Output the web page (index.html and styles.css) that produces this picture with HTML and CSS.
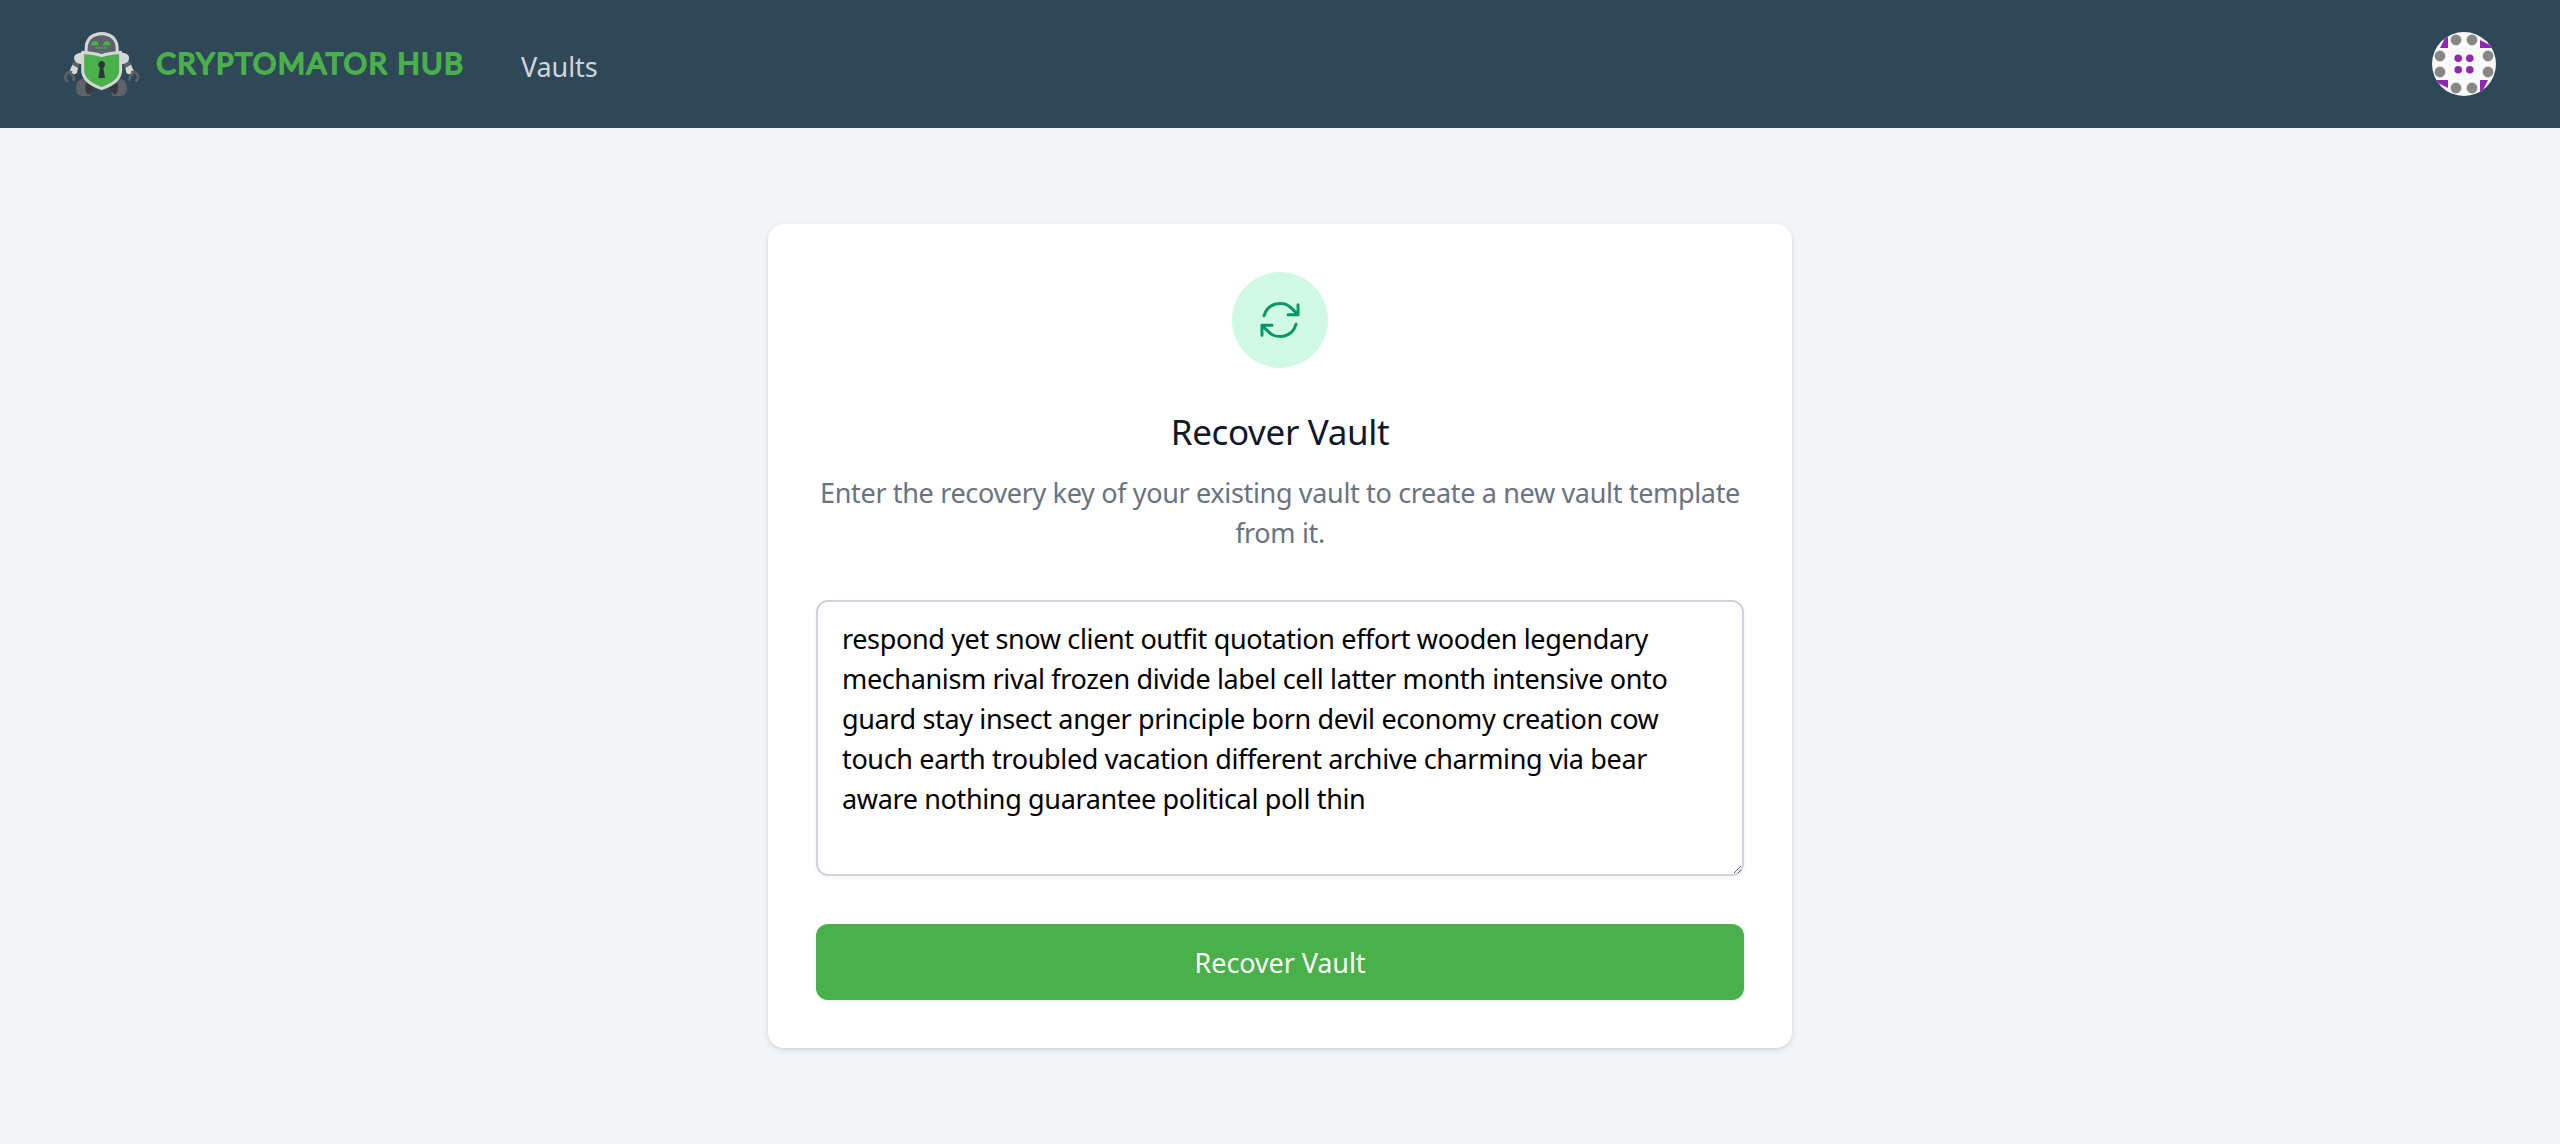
FILE: index.html
```html
<!DOCTYPE html>
<html lang="en">
<head>
<meta charset="utf-8">
<title>Cryptomator Hub</title>
<link rel="stylesheet" href="styles.css">
</head>
<body>
<header class="navbar">
  <div class="brand">
    <svg class="brand-logo" viewBox="42 36 228 192" aria-hidden="true">
      <path fill="#5b6268" d="M110 175c-22 0-32 12-32 30 0 16 8 23 20 23h22l8-34zM198 175c22 0 33 12 33 30 0 16-8 23-20 23h-24l-6-34z"/>
      <path fill="#35393c" d="M109 186l20 12c1 10-6 22-14 26-10-6-11-26-6-38zM201 186l-22 12c0 10 8 22 16 26 10-6 11-26 6-38z"/>
      <circle cx="77" cy="135" r="11" fill="#5b6268"/>
      <circle cx="233" cy="135" r="11" fill="#5b6268"/>
      <g fill="#d5d6d7">
        <path d="M88 99c10-2 16 3 16 12v16c-2 5-8 6-16 4-20-3-22-29 0-32zM222 99c-10-2-15 3-15 12v16c2 5 7 6 15 4 20-3 22-29 0-32z"/>
        <path d="M67 134l17 10-3 14c-8 9-22 4-22-6zM243 134l-17 10 3 14c8 9 22 4 22-6z"/>
        <path d="M104 97V84c0-29 21-48 51-48s51 19 51 48v13z"/>
      </g>
      <g fill="none" stroke="#5b6268" stroke-width="8">
        <path d="M66 157c-12-3-20 5-20 15 0 6 3 10 8 13M62 160c8 6 11 14 8 22"/>
        <path d="M244 157c12-3 20 5 20 15 0 6-3 10-8 13M248 160c-8 6-11 14-8 22"/>
      </g>
      <path fill="#5b6268" d="M113 96V85c0-24 18-39 42-39s42 15 42 39v11z"/>
      <path fill="#49b04a" d="M122 76c2-8 7-13 13-13s10 5 11 13zM158 76c2-8 6-13 11-13 7 0 12 5 14 13z"/>
      <path fill="none" stroke="#49b04a" stroke-width="6" stroke-dasharray="5 4" d="M136 83h37"/>
      <path fill="#49b04a" stroke="#d5d6d7" stroke-width="9" stroke-linejoin="round" d="M98 97c20 2 39 2 57 10 18-8 37-8 57-10v53c0 28-25 45-57 56-32-11-57-28-57-56z"/>
      <path fill="#303438" d="M155 122a12 12 0 0 1 5 22l5 30h-20l5-30a12 12 0 0 1 5-22z"/>
    </svg>
    <svg class="brand-name" viewBox="0 0 310 40">
      <text x="1.2" y="30.2" textLength="307" lengthAdjust="spacing">CRYPTOMATOR HUB</text>
    </svg>
  </div>
  <nav class="nav"><a class="nav-link">Vaults</a></nav>
  <svg class="avatar" viewBox="0 0 64 64" role="img" aria-label="Profile">
    <rect width="64" height="64" fill="#f8f8f8"/>
    <g fill="#8e28b4">
      <path d="M16 0v16H8zM48 8l16 8H48zM0 48h16v8zM48 48h8l-8 16z"/>
      <circle cx="26.2" cy="26.2" r="3.8"/><circle cx="37.8" cy="26.2" r="3.8"/>
      <circle cx="26.2" cy="37.8" r="3.8"/><circle cx="37.8" cy="37.8" r="3.8"/>
    </g>
    <g fill="#888">
      <circle cx="24" cy="8" r="5.4"/><circle cx="40" cy="8" r="5.4"/>
      <circle cx="8" cy="24" r="5.4"/><circle cx="56" cy="24" r="5.4"/>
      <circle cx="8" cy="40" r="5.4"/><circle cx="56" cy="40" r="5.4"/>
      <circle cx="24" cy="56" r="5.4"/><circle cx="40" cy="56" r="5.4"/>
    </g>
  </svg>
</header>
<main class="content">
  <form class="card">
    <div class="badge">
      <svg class="badge-icon" viewBox="0 0 24 24" aria-hidden="true">
        <path d="M16.023 9.348h4.992v-.001M2.985 19.644v-4.992m0 0h4.992m-4.993 0l3.181 3.183a8.25 8.25 0 0013.803-3.7M4.031 9.865a8.25 8.25 0 0113.803-3.7l3.181 3.182m0-4.991v4.99"/>
      </svg>
    </div>
    <h1 class="title">Recover Vault</h1>
    <p class="description">Enter the recovery key of your existing vault to create a new vault template from it.</p>
    <textarea class="recovery-key" rows="6" spellcheck="false" aria-label="Recovery key">respond yet snow client outfit quotation effort wooden legendary mechanism rival frozen divide label cell latter month intensive onto guard stay insect anger principle born devil economy creation cow touch earth troubled vacation different archive charming via bear aware nothing guarantee political poll thin</textarea>
    <button class="submit" type="button">Recover Vault</button>
  </form>
</main>
</body>
</html>
```
FILE: styles.css
```css
* {
  box-sizing: border-box;
}

body {
  margin: 0;
  min-height: 100vh;
  background: #f3f4f6;
  font-family: "Noto Sans", sans-serif;
  font-size: 27px;
  line-height: 40px;
}

.navbar {
  display: flex;
  align-items: center;
  height: 128px;
  padding: 0 64px;
  background: #2f4858;
}

.brand {
  display: flex;
  align-items: center;
  gap: 15px;
}

.brand-logo {
  width: 76px;
  height: 64px;
}

.brand-name {
  width: 310px;
  height: 40px;
  overflow: visible;
  fill: #49b04a;
  stroke: #49b04a;
  stroke-width: 1.8px;
  stroke-linejoin: round;
  font-family: Lato, sans-serif;
  font-size: 29.5px;
}

.nav {
  flex: 1;
  margin-left: 56px;
  padding-top: 5px;
}

.nav-link {
  color: #d1d5db;
  letter-spacing: -0.1px;
}

.avatar {
  width: 64px;
  height: 64px;
  border-radius: 50%;
}

.content {
  display: flex;
  justify-content: center;
  padding-top: 96px;
}

.card {
  display: flex;
  flex-direction: column;
  width: 1024px;
  padding: 48px;
  border-radius: 16px;
  background: #fff;
  box-shadow: 0 2px 6px rgba(0, 0, 0, 0.1), 0 2px 4px -2px rgba(0, 0, 0, 0.1);
}

.badge {
  display: flex;
  align-items: center;
  justify-content: center;
  align-self: center;
  width: 96px;
  height: 96px;
  border-radius: 50%;
  background: #d1fae5;
}

.badge-icon {
  width: 48px;
  height: 48px;
  fill: none;
  stroke: #059669;
  stroke-width: 1.5;
  stroke-linecap: round;
  stroke-linejoin: round;
}

.title {
  margin: 40px 0 16px;
  color: #111827;
  font-size: 35px;
  font-weight: 400;
  line-height: 48px;
  letter-spacing: -0.35px;
  text-align: center;
}

.description {
  margin: 1px 0 47px;
  color: #6b7280;
  letter-spacing: -0.34px;
  text-align: center;
}

.recovery-key {
  display: block;
  width: 100%;
  height: 276px;
  margin: 0 0 48px;
  padding: 17px 24px 15px;
  border: 2px solid #d1d5db;
  border-radius: 12px;
  background: #fff;
  box-shadow: 0 2px 4px rgba(0, 0, 0, 0.05);
  color: #000;
  font: inherit;
  letter-spacing: -0.36px;
  resize: vertical;
}

.submit {
  height: 76px;
  padding: 2px 0 0;
  border: 0;
  border-radius: 12px;
  background: #49b04a;
  box-shadow: 0 2px 4px rgba(0, 0, 0, 0.05);
  color: #fff;
  font: inherit;
  letter-spacing: -0.1px;
}
```
